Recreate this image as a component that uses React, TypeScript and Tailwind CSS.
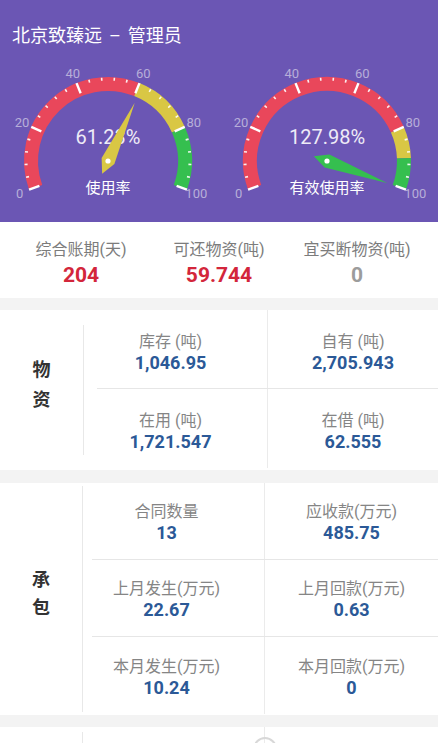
import React from "react";

const CX = 108;
const CY = 101;
const START = 200;
const SPAN = 220;

const ang = (v: number) => START - (SPAN * v) / 100;
const pt = (r: number, deg: number): [number, number] => {
  const a = (deg * Math.PI) / 180;
  return [CX + r * Math.cos(a), CY - r * Math.sin(a)];
};

const RED = "#e9475b";
const YEL = "#d9c744";
const GRN = "#35bf4f";

function arcPath(v1: number, v2: number, r: number) {
  const a1 = ang(v1);
  const a2 = ang(v2);
  const [x1, y1] = pt(r, a1);
  const [x2, y2] = pt(r, a2);
  const large = a1 - a2 > 180 ? 1 : 0;
  return `M ${x1} ${y1} A ${r} ${r} 0 ${large} 1 ${x2} ${y2}`;
}

function Gauge({
  value,
  segs,
  needle,
  label,
  text,
}: {
  value: number;
  segs: [number, number, string][];
  needle: string;
  label: string;
  text: string;
}) {
  const v = Math.min(100, Math.max(0, value));
  const a = ang(v);
  const tip = pt(64, a);
  const tail = pt(-14, a);
  const s1 = pt(7, a + 90);
  const s2 = pt(7, a - 90);
  const majors = [0, 20, 40, 60, 80, 100];
  const minors: number[] = [];
  for (let i = 0; i <= 100; i += 4) if (i % 20 !== 0) minors.push(i);
  return (
    <svg width="219" height="162" viewBox="0 0 219 162" className="block">
      {segs.map(([a1, a2, c], i) => (
        <path key={i} d={arcPath(a1, a2, 77)} stroke={c} strokeWidth="14" fill="none" />
      ))}
      {minors.map((m) => {
        const [x1, y1] = pt(80.5, ang(m));
        const [x2, y2] = pt(83.5, ang(m));
        return <line key={m} x1={x1} y1={y1} x2={x2} y2={y2} stroke="#ffffff" strokeWidth="1.6" opacity="0.9" />;
      })}
      {majors.map((m) => {
        const [x1, y1] = pt(73, ang(m));
        const [x2, y2] = pt(84, ang(m));
        return <line key={m} x1={x1} y1={y1} x2={x2} y2={y2} stroke="#ffffff" strokeWidth="2.4" />;
      })}
      {majors.map((m) => {
        const [x, y] = pt(94, ang(m));
        return (
          <text
            key={m}
            x={x}
            y={y}
            textAnchor="middle"
            dominantBaseline="central"
            fontSize="13"
            fill="#b7aed9"
            style={{ fontFamily: "Roboto, 'Noto Sans', sans-serif" }}
          >
            {m}
          </text>
        );
      })}
      <text
        x={CX}
        y={77}
        textAnchor="middle"
        dominantBaseline="central"
        fontSize="20"
        fill="#eeebf7"
        style={{ fontFamily: "Roboto, 'Noto Sans', sans-serif" }}
      >
        {text}
      </text>
      <polygon
        points={`${tip[0]},${tip[1]} ${s1[0]},${s1[1]} ${tail[0]},${tail[1]} ${s2[0]},${s2[1]}`}
        fill={needle}
      />
      <circle cx={CX} cy={CY} r="2.6" fill="#ffffff" />
      <text
        x={CX}
        y={128}
        textAnchor="middle"
        dominantBaseline="central"
        fontSize="15"
        fill="#ffffff"
        style={{ fontFamily: "Roboto, 'Noto Sans CJK SC', sans-serif" }}
      >
        {label}
      </text>
    </svg>
  );
}

function Stat({ label, value, color }: { label: string; value: string; color: string }) {
  return (
    <div className="flex-1 flex flex-col items-center pt-[17px]">
      <div className="text-[16px] leading-[22px] text-[#7c7c7c]">{label}</div>
      <div className={`text-[21px] leading-[26px] mt-[1px] font-bold ${color}`}>{value}</div>
    </div>
  );
}

function Item({ label, value }: { label: string; value: string }) {
  return (
    <>
      <div className="text-[16px] leading-[20px] text-[#858585]">{label}</div>
      <div className="text-[18px] leading-[22px] font-bold text-[#2b5997]">{value}</div>
    </>
  );
}

export default function App() {
  const wz = [
    [
      ["库存 (吨)", "1,046.95"],
      ["自有 (吨)", "2,705.943"],
    ],
    [
      ["在用 (吨)", "1,721.547"],
      ["在借 (吨)", "62.555"],
    ],
  ];
  const cb = [
    [
      ["合同数量", "13"],
      ["应收款(万元)", "485.75"],
    ],
    [
      ["上月发生(万元)", "22.67"],
      ["上月回款(万元)", "0.63"],
    ],
    [
      ["本月发生(万元)", "10.24"],
      ["本月回款(万元)", "0"],
    ],
  ];
  return (
    <div
      className="w-[438px] min-h-[743px] bg-[#f3f3f3] overflow-hidden"
      style={{ fontFamily: "Roboto, 'Noto Sans CJK SC', sans-serif" }}
    >
      {/* Header */}
      <div className="bg-[#6b56b4] h-[222px] flex flex-col">
        <div className="h-[60px] pl-[12px] pt-[25px] text-[18px] leading-[22px] text-white">
          北京致臻远<span className="mx-[7px]">–</span>管理员
        </div>
        <div className="grid grid-cols-2">
          <Gauge
            value={61.23}
            text="61.23%"
            label="使用率"
            needle={YEL}
            segs={[
              [0, 60, RED],
              [60, 80, YEL],
              [80, 100, GRN],
            ]}
          />
          <Gauge
            value={127.98}
            text="127.98%"
            label="有效使用率"
            needle={GRN}
            segs={[
              [0, 80, RED],
              [80, 90, YEL],
              [90, 100, GRN],
            ]}
          />
        </div>
      </div>

      {/* Stats */}
      <div className="bg-white h-[76px] flex px-[12px]">
        <Stat label="综合账期(天)" value="204" color="text-[#d3263b]" />
        <Stat label="可还物资(吨)" value="59.744" color="text-[#d3263b]" />
        <Stat label="宜买断物资(吨)" value="0" color="text-[#9c9c9c]" />
      </div>

      <div className="h-[12px]" />

      {/* 物资 */}
      <div className="bg-white flex h-[160px]">
        <div className="w-[83px] flex flex-col items-center justify-center pb-[10px] text-[18px] leading-[30px] font-bold text-[#333333]">
          <span>物</span>
          <span>资</span>
        </div>
        <div className="w-px bg-[#e8e8e8] my-[15px]" />
        <div className="flex-1 pl-[13px] flex flex-col">
          {wz.map((row, i) => (
            <div key={i} className={`flex h-[79px] ${i === 0 ? "border-b border-[#e6e6e6]" : ""}`}>
              <div className="w-[171px] border-r border-[#ebebeb] flex flex-col items-center justify-center pr-[23px] pt-[7px]">
                <Item label={row[0][0]} value={row[0][1]} />
              </div>
              <div className="flex-1 flex flex-col items-center justify-center pt-[7px]">
                <Item label={row[1][0]} value={row[1][1]} />
              </div>
            </div>
          ))}
        </div>
      </div>

      <div className="h-[13px]" />

      {/* 承包 */}
      <div className="bg-white flex h-[232px]">
        <div className="w-[82px] flex flex-col items-center justify-center pb-[10px] text-[18px] leading-[28px] font-bold text-[#333333]">
          <span>承</span>
          <span>包</span>
        </div>
        <div className="w-px bg-[#e8e8e8] my-[3px]" />
        <div className="flex-1 pl-[9px] flex flex-col">
          {cb.map((row, i) => (
            <div key={i} className={`flex h-[77px] ${i < 2 ? "border-b border-[#e6e6e6]" : ""}`}>
              <div className="w-[173px] border-r border-[#ebebeb] flex flex-col items-center justify-center pr-[23px] pt-[4px]">
                <Item label={row[0][0]} value={row[0][1]} />
              </div>
              <div className="flex-1 flex flex-col items-center justify-center pt-[4px]">
                <Item label={row[1][0]} value={row[1][1]} />
              </div>
            </div>
          ))}
        </div>
      </div>

      <div className="h-[12px]" />

      {/* Next section (partially visible) */}
      <div className="bg-white flex h-[100px]">
        <div className="w-[82px]" />
        <div className="w-px bg-[#e8e8e8] mt-[5px]" />
        <div className="flex-1 pl-[9px] flex">
          <div className="w-[173px] border-r border-[#ebebeb]" />
          <div className="flex-1 flex items-start pt-[10px] pl-[-10px]">
            <div className="-ml-[12px] w-[24px] h-[24px] rounded-full border-2 border-[#d8d8d8]" />
            <div className="ml-[6px] mt-[6px] w-[140px] h-[20px] bg-[#f7f7f7]" />
          </div>
        </div>
      </div>
    </div>
  );
}
